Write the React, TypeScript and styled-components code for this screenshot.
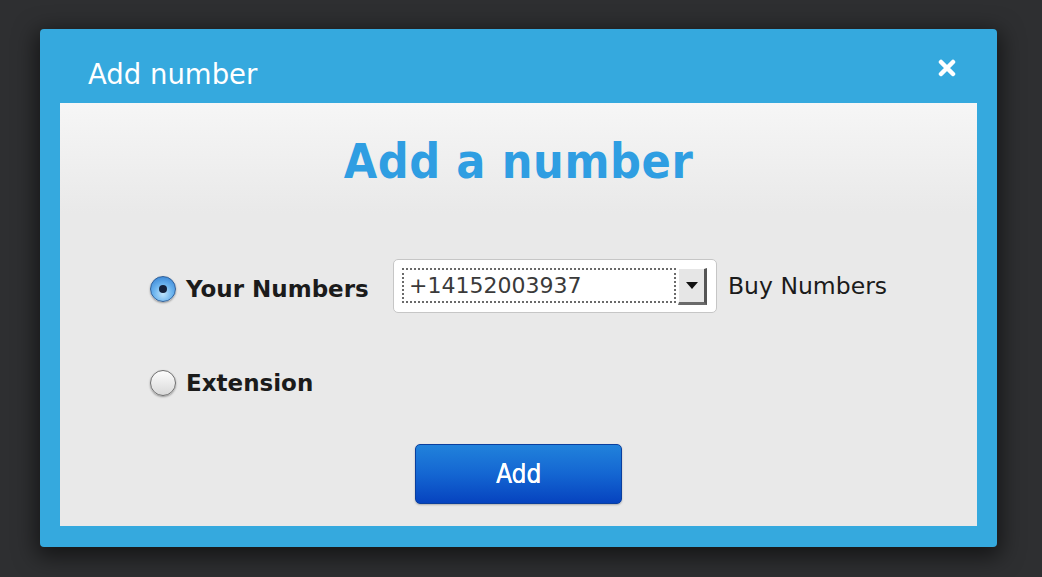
import React from "react";
import styled, { createGlobalStyle } from "styled-components";

const Global = createGlobalStyle`
  html, body { margin: 0; padding: 0; background: #2e2f31; }
  body { font-family: "DejaVu Sans", Verdana, sans-serif; }
`;

const Page = styled.div`
  width: 1042px;
  height: 577px;
  box-sizing: border-box;
  padding: 29px 45px 30px 40px;
  background: #2e2f31;
`;

const Dialog = styled.div`
  height: 518px;
  box-sizing: border-box;
  background: #35a9de;
  border-radius: 4px;
  box-shadow: 0 6px 22px 4px rgba(0, 0, 0, 0.55);
  display: flex;
  flex-direction: column;
  padding: 0 20px 21px 20px;
`;

const Header = styled.div`
  display: flex;
  justify-content: space-between;
  align-items: flex-start;
  padding: 29px 21px 13px 28px;
`;

const Title = styled.div`
  font-family: "DejaVu Sans", Verdana, sans-serif;
  font-size: 27.5px;
  line-height: 32px;
  color: #ffffff;
`;

const CloseButton = styled.button`
  border: 0;
  padding: 0;
  margin-top: 1px;
  background: transparent;
  width: 18px;
  height: 18px;
  display: block;
  cursor: pointer;
`;

const Panel = styled.div`
  flex: 1;
  background: linear-gradient(#f6f6f6 0px, #e9e9e9 110px, #e9e9e9 100%);
  display: flex;
  flex-direction: column;
  padding-top: 30px;
`;

const Heading = styled.h1`
  margin: 0;
  text-align: center;
  font-family: "DejaVu Sans Condensed", "DejaVu Sans", sans-serif;
  font-stretch: condensed;
  font-weight: bold;
  font-size: 48px;
  letter-spacing: 0.6px;
  line-height: 56px;
  color: #2f9ee2;
`;

const Form = styled.div`
  display: flex;
  flex-direction: column;
  padding-left: 90px;
  margin-top: 70px;
  gap: 56px;
`;

const Row = styled.div`
  display: flex;
  align-items: center;
`;

const RadioLabel = styled.label<{ $width?: number }>`
  display: flex;
  align-items: center;
  gap: 10px;
  width: ${(p) => (p.$width ? `${p.$width}px` : "auto")};
  margin-top: ${(p) => (p.$width ? "6px" : "0")};
  font-family: "DejaVu Sans", Verdana, sans-serif;
  font-weight: bold;
  font-size: 23px;
  line-height: 28px;
  color: #1b1b1b;
`;

const Radio = styled.span<{ $checked?: boolean }>`
  width: 26px;
  height: 26px;
  box-sizing: border-box;
  border-radius: 50%;
  display: flex;
  align-items: center;
  justify-content: center;
  border: 1px solid ${(p) => (p.$checked ? "#2f5f98" : "#6e6e6e")};
  background: ${(p) =>
    p.$checked
      ? "radial-gradient(circle at 50% 70%, #bfe4fb 0%, #6cb4ee 45%, #2a78cf 100%)"
      : "linear-gradient(#fdfdfd, #d9d9d9)"};
  box-shadow: 0 1px 2px rgba(0, 0, 0, 0.35);
`;

const Dot = styled.span`
  width: 8px;
  height: 8px;
  border-radius: 50%;
  background: #14213a;
`;

const SelectBox = styled.div`
  width: 324px;
  height: 54px;
  box-sizing: border-box;
  background: #ffffff;
  border: 1px solid #c6c6c6;
  border-radius: 5px;
  display: flex;
  align-items: flex-start;
  padding: 8px 9px 8px 8px;
  gap: 2px;
`;

const ValueField = styled.div`
  flex: 1;
  height: 35px;
  box-sizing: border-box;
  border: 2px dotted #6a6a6a;
  padding-left: 5px;
  font-family: "DejaVu Sans", Verdana, sans-serif;
  font-size: 22px;
  line-height: 31px;
  color: #3a3a3a;
`;

const DropButton = styled.div`
  width: 29px;
  height: 37px;
  box-sizing: border-box;
  background: #e6e6e6;
  border-top: 1px solid #ffffff;
  border-left: 1px solid #ffffff;
  border-right: 3px solid #555555;
  border-bottom: 3px solid #6a6a6a;
  display: flex;
  align-items: center;
  justify-content: center;
`;

const BuyLink = styled.a`
  margin-left: 11px;
  font-family: "DejaVu Sans", Verdana, sans-serif;
  font-size: 23.5px;
  line-height: 28px;
  color: #1b1b1b;
  text-decoration: none;
`;

const Footer = styled.div`
  display: flex;
  justify-content: center;
  margin-top: 47px;
`;

const AddButton = styled.button`
  width: 207px;
  height: 60px;
  border: 1px solid #0a3f9e;
  border-radius: 5px;
  background: linear-gradient(#2182db 0%, #1466d2 50%, #0643bf 100%);
  color: #ffffff;
  font-family: "DejaVu Sans Condensed", "DejaVu Sans", sans-serif;
  font-stretch: condensed;
  font-weight: normal;
  font-size: 26px;
  text-shadow: 0.4px 0 0 #ffffff;
  padding: 0;
  cursor: pointer;
  box-shadow: 0 1px 2px rgba(0, 0, 0, 0.25);
`;

export default function App() {
  return (
    <>
      <Global />
      <Page>
        <Dialog>
          <Header>
            <Title>Add number</Title>
            <CloseButton aria-label="Close">
              <svg width="18" height="18" viewBox="0 0 18 18">
                <path
                  d="M3 3 L15 15 M15 3 L3 15"
                  stroke="#ffffff"
                  strokeWidth="4.5"
                  strokeLinecap="round"
                />
              </svg>
            </CloseButton>
          </Header>
          <Panel>
            <Heading>Add a number</Heading>
            <Form>
              <Row>
                <RadioLabel $width={243}>
                  <Radio $checked>
                    <Dot />
                  </Radio>
                  Your Numbers
                </RadioLabel>
                <SelectBox>
                  <ValueField>+14152003937</ValueField>
                  <DropButton>
                    <svg width="12" height="8" viewBox="0 0 12 8">
                      <path d="M0 0 H12 L6 7 Z" fill="#111111" />
                    </svg>
                  </DropButton>
                </SelectBox>
                <BuyLink>Buy Numbers</BuyLink>
              </Row>
              <Row>
                <RadioLabel>
                  <Radio />
                  Extension
                </RadioLabel>
              </Row>
            </Form>
            <Footer>
              <AddButton>Add</AddButton>
            </Footer>
          </Panel>
        </Dialog>
      </Page>
    </>
  );
}
